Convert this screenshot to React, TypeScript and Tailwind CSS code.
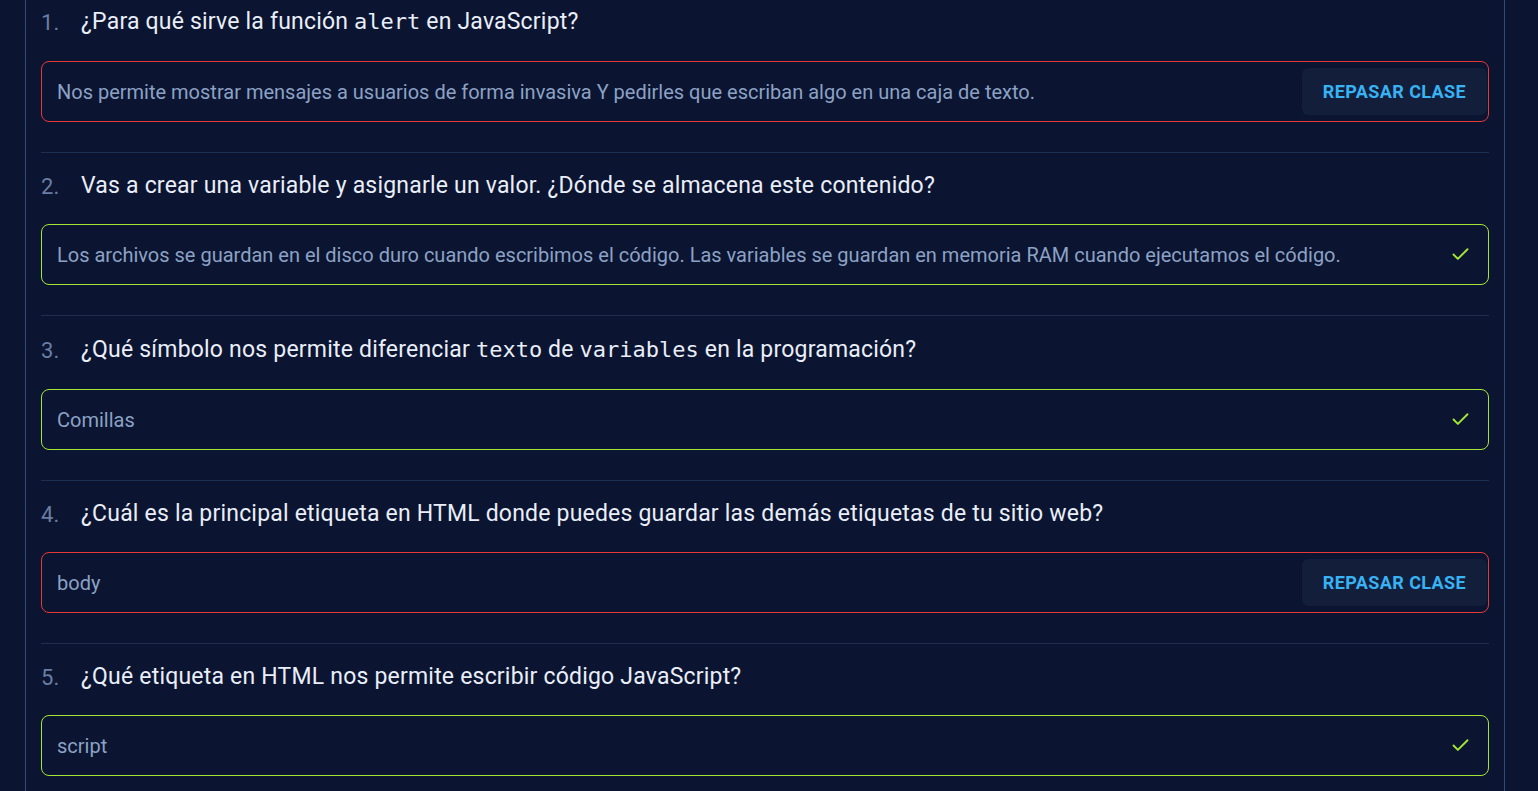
import { Check } from 'lucide-react'
import type { ReactNode } from 'react'

interface Item {
  question: ReactNode
  answer: string
  correct: boolean
  hasCode?: boolean
}

const Code = ({ children }: { children: ReactNode }) => (
  <code className="font-['DejaVu_Sans_Mono',monospace] text-[22px] tracking-normal">{children}</code>
)

const items: Item[] = [
  {
    question: (
      <>
        ¿Para qué sirve la función <Code>alert</Code> en JavaScript?
      </>
    ),
    answer: 'Nos permite mostrar mensajes a usuarios de forma invasiva Y pedirles que escriban algo en una caja de texto.',
    correct: false,
    hasCode: true,
  },
  {
    question: 'Vas a crear una variable y asignarle un valor. ¿Dónde se almacena este contenido?',
    answer: 'Los archivos se guardan en el disco duro cuando escribimos el código. Las variables se guardan en memoria RAM cuando ejecutamos el código.',
    correct: true,
  },
  {
    question: (
      <>
        ¿Qué símbolo nos permite diferenciar <Code>texto</Code> de <Code>variables</Code> en la programación?
      </>
    ),
    answer: 'Comillas',
    correct: true,
    hasCode: true,
  },
  {
    question: '¿Cuál es la principal etiqueta en HTML donde puedes guardar las demás etiquetas de tu sitio web?',
    answer: 'body',
    correct: false,
  },
  {
    question: '¿Qué etiqueta en HTML nos permite escribir código JavaScript?',
    answer: 'script',
    correct: true,
  },
]

export default function App() {
  return (
    <div className="min-h-screen bg-[#0b1431] font-['Roboto',sans-serif]">
      <div className="ml-[25px] w-[1480px] min-h-screen border-x border-[#34487a] px-[15px] pt-[6px]">
        {items.map((item, i) => (
          <div
            key={i}
            className={
              i === 0
                ? 'pb-[30px] border-b border-[#1f2f50]'
                : i === items.length - 1
                  ? 'pt-[18px] pb-[30px]'
                  : 'pt-[18px] pb-[30px] border-b border-[#1f2f50]'
            }
          >
            <div className={`flex items-center pt-[3px] ${item.hasCode ? 'h-[30px]' : 'h-[28px]'}`}>
              <span className="w-[40px] text-[22px] text-[#6a7ea3]">{i + 1}.</span>
              <span className="text-[23px] tracking-[0.2px] text-[#e9eef8]">{item.question}</span>
            </div>
            <div
              className={`mt-[25px] h-[61px] rounded-lg border flex items-center justify-between pl-[15px] ${
                item.correct ? 'border-[#a3e635] pr-[17px]' : 'border-[#e53935] pr-[1px]'
              }`}
            >
              <span className="text-[20px] text-[#8ca2c4]">{item.answer}</span>
              {item.correct ? (
                <Check size={21} strokeWidth={2.2} className="text-[#a3e635]" />
              ) : (
                <button className="h-[47px] w-[185px] rounded-md bg-[#131e3b] text-[18px] font-bold tracking-[0.4px] text-[#38b2f3]">
                  REPASAR CLASE
                </button>
              )}
            </div>
          </div>
        ))}
      </div>
    </div>
  )
}
